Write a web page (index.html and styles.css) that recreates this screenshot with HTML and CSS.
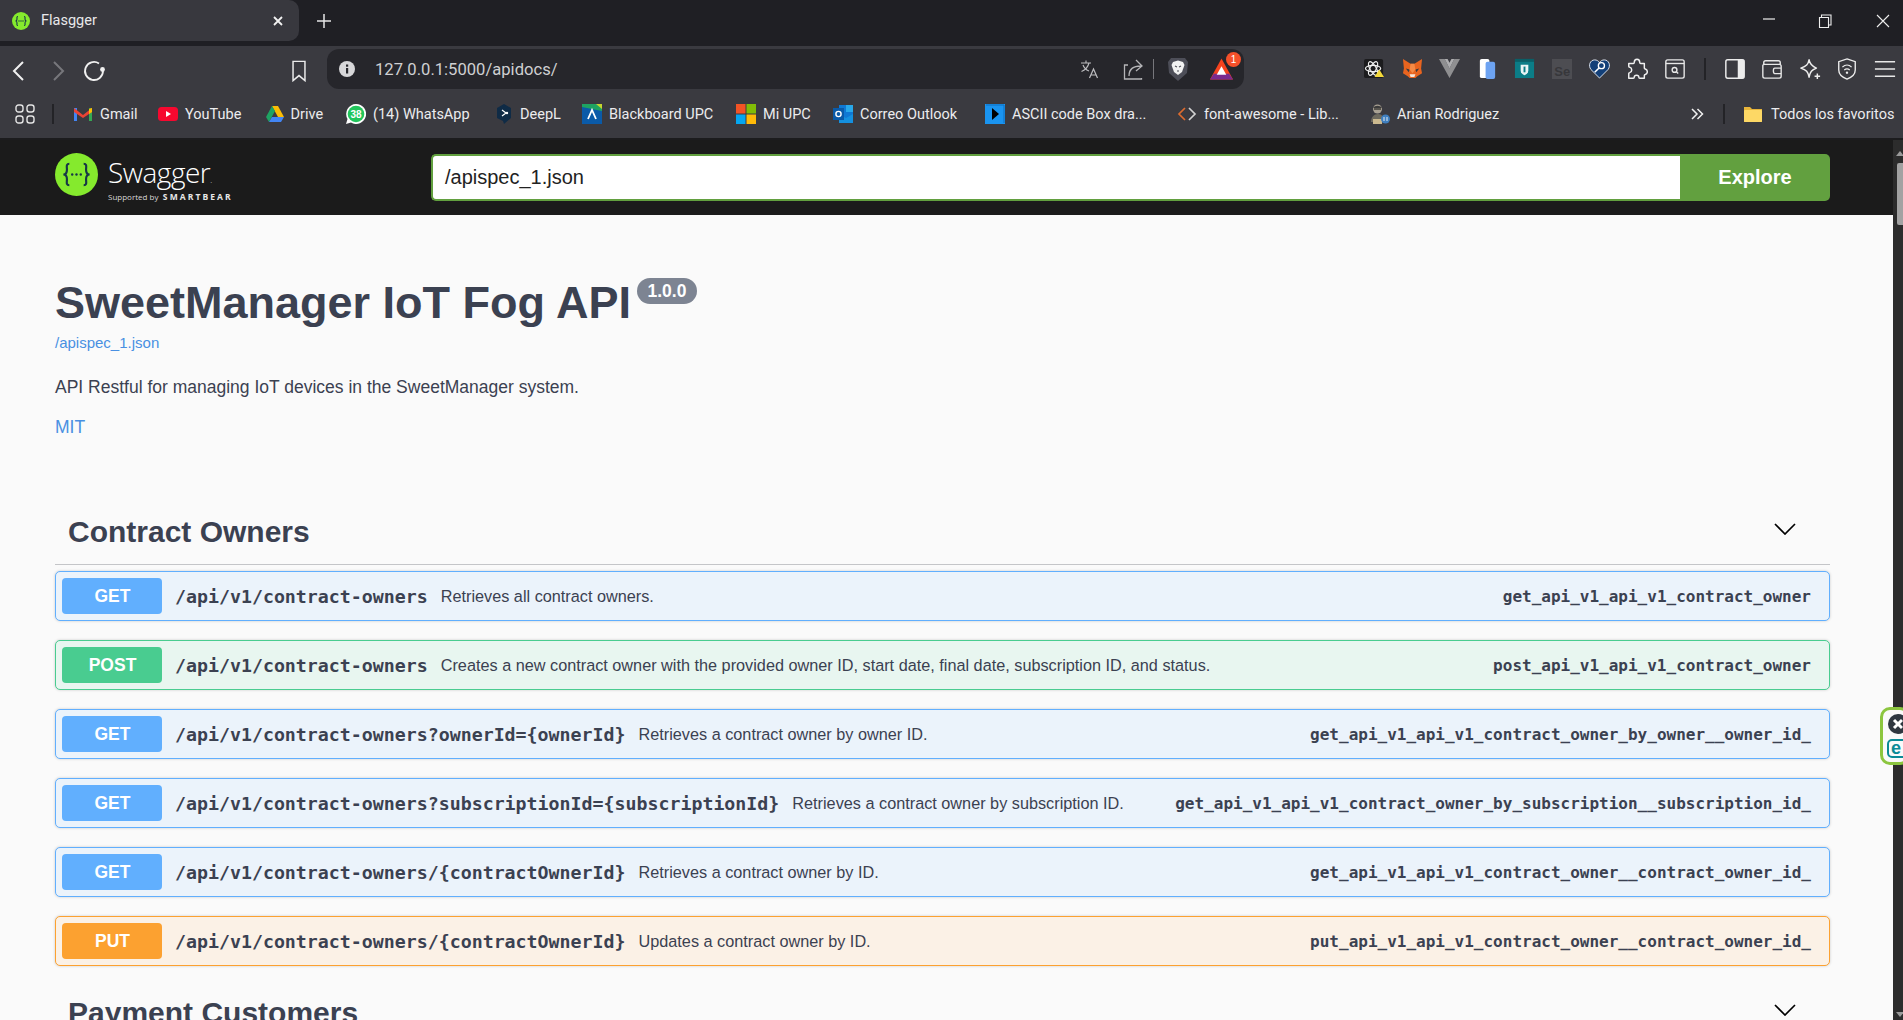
FILE: index.html
```html
<!DOCTYPE html>
<html lang="en">
<head>
<meta charset="utf-8">
<title>Flasgger</title>
<link rel="stylesheet" href="styles.css">
</head>
<body>
<div class="browser">
  <div class="tabstrip">
    <div class="tab">
      <svg class="fav" viewBox="0 0 18 18"><circle cx="9" cy="9" r="9" fill="#85ea2d"/><g fill="none" stroke="#173647" stroke-width="1.100"><path d="M6 4.500C4.500 4.500 5 6 5 7 5 8.500 4.300 9 3.500 9 4.300 9 5 9.500 5 11 5 12 4.500 13.500 6 13.500"/><path d="M12 4.500C13.500 4.500 13 6 13 7 13 8.500 13.700 9 14.500 9 13.700 9 13 9.500 13 11 13 12 13.500 13.500 12 13.500"/></g><g fill="#173647"><circle cx="7" cy="9" r=".7"/><circle cx="9" cy="9" r=".7"/><circle cx="11" cy="9" r=".7"/></g></svg>
      <span class="tab-title">Flasgger</span>
      <svg class="tab-x" viewBox="0 0 12 12"><path d="M2 2l8 8M10 2l-8 8" stroke="#f2f2f2" stroke-width="1.800" fill="none"/></svg>
    </div>
    <svg class="tab-plus" viewBox="0 0 14 14"><path d="M7 0v14M0 7h14" stroke="#e6e6e6" stroke-width="1.500" fill="none"/></svg>
    <div class="winctl">
      <svg class="win" viewBox="0 0 14 14"><path d="M1 5h12" stroke="#eee" stroke-width="1.200"/></svg>
      <svg class="win" viewBox="0 0 14 14"><path d="M1.500 3.500h9v10h-9zM3.500 3.500v-2.500h9.500v10h-2.500" stroke="#eee" stroke-width="1.100" fill="none"/></svg>
      <svg class="win win-close" viewBox="0 0 14 14"><path d="M1 1l12 12M13 1L1 13" stroke="#eee" stroke-width="1.100" fill="none"/></svg>
    </div>
  </div>

  <div class="toolbar">
    <div class="nav-icons">
      <svg class="nav" viewBox="0 0 24 24"><path d="M15 3L6 12l9 9" stroke="#f0f0f0" stroke-width="2" fill="none"/></svg>
      <svg class="nav" viewBox="0 0 24 24"><path d="M9 3l9 9-9 9" stroke="#77777c" stroke-width="2" fill="none"/></svg>
      <svg class="nav" viewBox="0 0 24 24"><path d="M21 12a9 9 0 1 1-4-7.500" stroke="#f0f0f0" stroke-width="1.800" fill="none"/><circle cx="20.500" cy="10.500" r="2.400" fill="#f0f0f0"/></svg>
    </div>
    <svg class="bookmark" viewBox="0 0 16 24"><path d="M1.500 1.500h13v21L8 17l-6.500 5.500z" stroke="#ececec" stroke-width="1.600" fill="none"/></svg>
    <div class="omnibox">
      <svg class="info" viewBox="0 0 16 16"><circle cx="8" cy="8" r="8" fill="#d7d7d9"/><rect x="7" y="7" width="2.200" height="5.500" fill="#26262b"/><rect x="7" y="3.500" width="2.200" height="2.200" fill="#26262b"/></svg>
      <span class="url">127.0.0.1:5000/apidocs/</span>
      <div class="omni-right">
        <svg class="o-ic o-translate" viewBox="0 0 20 20"><path d="M1 4h10M6 1.500V4M9 4c-1 4-4 7-7.500 8.500M3 6c1 3 3.500 5 6 6" stroke="#bdbdc0" stroke-width="1.100" fill="none"/><path d="M9.500 19l4-9 4 9M11 16h5" stroke="#bdbdc0" stroke-width="1.200" fill="none"/></svg>
        <svg class="o-ic o-share" viewBox="0 0 20 24"><path d="M5 8H1.500v14h17v-1M6 19c0-7 4-10 12-10M13 3l6 6-6 5" stroke="#b5b5b8" stroke-width="1.300" fill="none"/></svg>
        <i class="o-sep"></i>
        <svg class="o-lion" viewBox="0 0 20 24"><path d="M3 1h14l3 4-1 11-9 8-9-8L0 5z" fill="#4d4e58"/><path d="M5 5l5-1.500L15 5l1.500 3-2.500 7-4 3-4-3-2.500-7z" fill="#f2f2f2"/><path d="M7 9l2 1M13 9l-2 1M9 14h2" stroke="#4d4e58" stroke-width="1.100"/></svg>
        <div class="bat">
          <svg class="bat-ic" viewBox="0 0 24 22"><path d="M12 0l12 22H0z" fill="#f5431e"/><path d="M0 22l4-6h16l4 6z" fill="#7a2a8e"/><path d="M12 8l5 9H7z" fill="#fff"/></svg>
          <span class="bat-badge">1</span>
        </div>
      </div>
    </div>
    <div class="ext-icons">
      <div class="slot"><svg class="s22" viewBox="0 0 22 22"><rect width="20" height="20" y="1" rx="2" fill="#1c1c1e"/><g stroke="#f1f1f1" stroke-width="1.200" fill="none"><ellipse cx="9.500" cy="11" rx="8" ry="3.200"/><ellipse cx="9.500" cy="11" rx="8" ry="3.200" transform="rotate(60 9.500 11)"/><ellipse cx="9.500" cy="11" rx="8" ry="3.200" transform="rotate(120 9.500 11)"/></g><path d="M16 12l5 8h-10z" fill="#f4d93a"/></svg></div>
      <div class="slot"><svg class="s22" viewBox="0 0 22 22"><path d="M1 1l8 5h4l8-5-1 10 1 5-5 3-2 2H8l-2-2-5-3 1-5z" fill="#e8641f"/><path d="M4 11l4 1-1 3zM18 11l-4 1 1 3z" fill="#3a3a40"/><path d="M8 17h6l-1 3H9z" fill="#f5e7dc"/><path d="M9 6h4l1 6-3 4-3-4z" fill="#f58a45"/></svg></div>
      <div class="slot"><svg class="s22" viewBox="0 0 22 22"><path d="M0 1h6l5 10 5-10h6L11 21z" fill="#8f8f91"/><path d="M6 1h3l2 4 2-4h3l-5 10z" fill="#aeaeb0"/></svg></div>
      <div class="slot"><svg class="s22" viewBox="0 0 22 22"><rect x="3" y="1" width="10" height="20" rx="2" fill="#fff"/><rect x="9" y="4" width="10" height="18" rx="2" fill="#6da3f2"/></svg></div>
      <div class="slot"><svg class="s22" viewBox="0 0 22 22"><rect x="1" y="1" width="20" height="20" fill="#0b7d87"/><rect x="1" y="1" width="20" height="3" fill="#0a5f67"/><path d="M7 7h8v6c0 3-2 4-4 5-2-1-4-2-4-5z" fill="#e8f4f5"/><path d="M10 9h2v6h-2z" fill="#0b7d87"/></svg></div>
      <div class="slot"><div class="se">Se</div></div>
      <div class="slot"><svg class="s22" viewBox="0 0 22 22"><path d="M11 21L2 12C-1 8 1 2 6 2c2 0 4 1 5 3 1-2 3-3 5-3 5 0 7 6 4 10z" fill="#123f78" stroke="#dfe6f0" stroke-width="1"/><circle cx="13" cy="8" r="3.200" fill="none" stroke="#fff" stroke-width="1.400"/><path d="M10.500 10.500L6 15" stroke="#fff" stroke-width="1.600"/></svg></div>
      <div class="slot"><svg class="s24" viewBox="0 0 24 24"><path d="M9 5c0-5 6-5 6 0 0 1 0 1 1 1h4v5c0 1 0 1 1 1 3 1 3 5 0 6-1 0-1 0-1 1v3h-5c-1 0-1 0-1-1 0-3-5-3-5 0 0 1 0 1-1 1H3v-5c0-1 1-1 1-1 3-1 3-5 0-6 0 0-1 0-1-1V6h5c1 0 1 0 1-1z" stroke="#f0f0f0" stroke-width="1.600" fill="none" stroke-linejoin="round"/></svg></div>
      <div class="slot"><svg class="s24" viewBox="0 0 24 24"><rect x="2" y="2" width="20" height="20" rx="2" stroke="#e8e8e8" stroke-width="1.500" fill="none"/><path d="M2 6h20" stroke="#e8e8e8" stroke-width="1.500"/><circle cx="11.500" cy="13" r="2.600" stroke="#e8e8e8" stroke-width="1.500" fill="none"/><path d="M13.500 15l2 2" stroke="#e8e8e8" stroke-width="1.500"/></svg></div>
      <i class="t-sep"></i>
      <div class="slot"><svg class="s24" viewBox="0 0 24 24"><rect x="2" y="2" width="20" height="20" rx="2" stroke="#ececec" stroke-width="1.600" fill="none"/><rect x="15" y="2" width="7" height="20" fill="#ececec"/></svg></div>
      <div class="slot"><svg class="s24" viewBox="0 0 24 24"><path d="M3 7V5c0-1 1-2 2-2h14c1 0 2 1 2 2v2M2 8c0-1 1-1 2-1h16c1 0 2 1 2 2v11c0 1-1 2-2 2H4c-1 0-2-1-2-2zM22 11h-7c-2 0-2 6 0 6h7" stroke="#e8e8e8" stroke-width="1.500" fill="none"/></svg></div>
      <div class="slot"><svg class="s24" viewBox="0 0 24 24"><path d="M11 2c1 5 3 7 8 9-5 2-7 4-8 10-1-6-3-8-9-10 6-2 8-4 9-9z" stroke="#eee" stroke-width="1.600" fill="none" stroke-linejoin="round"/><path d="M20 17v6M17 20h6" stroke="#eee" stroke-width="1.600"/></svg></div>
      <div class="slot"><svg class="s24" viewBox="0 0 24 24"><path d="M12 1l9 3v9c0 5-4 8-9 10-5-2-9-5-9-10V4z" stroke="#ececec" stroke-width="1.500" fill="none"/><path d="M7 10c3-3 7-3 10 0M9 13c2-1.500 4-1.500 6 0" stroke="#ececec" stroke-width="1.400" fill="none"/><circle cx="12" cy="16" r="1.300" fill="#ececec"/></svg></div>
      <div class="slot"><svg class="s24" viewBox="0 0 24 24"><path d="M1 4h22M1 12h22M1 20h22" stroke="#e8e8e8" stroke-width="1.600"/></svg></div>
    </div>
  </div>

  <div class="bookmarks">
    <svg class="apps" viewBox="0 0 20 20"><g stroke="#e4e4e4" stroke-width="1.400" fill="none"><rect x="1" y="1" width="7" height="7" rx="2.500"/><rect x="12" y="1" width="7" height="7" rx="2.500"/><rect x="1" y="12" width="7" height="7" rx="2.500"/><rect x="12" y="12" width="7" height="7" rx="2.500"/></g></svg>
    <i class="b-sep"></i>
    <div class="b-list">
      <a class="bm"><svg class="bi" viewBox="0 0 20 20"><path d="M1 4h3v13H1z" fill="#4285f4"/><path d="M16 4h3v13h-3z" fill="#34a853"/><path d="M1 4l9 7 9-7v4l-9 6-9-6z" fill="#ea4335"/><path d="M16 5l3-1v4l-3 2z" fill="#fbbc04"/></svg><span>Gmail</span></a>
      <a class="bm"><svg class="bi" viewBox="0 0 20 20"><rect y="3" width="20" height="14" rx="3.500" fill="#f6082f"/><path d="M8 7l5 3-5 3z" fill="#fff"/></svg><span>YouTube</span></a>
      <a class="bm"><svg class="bi bi-tight" viewBox="0 0 20 20"><path d="M7 2h6l6 11h-6z" fill="#fbbc04"/><path d="M7 2L1 13l3 5 6-11z" fill="#1ea362"/><path d="M4 18h12l3-5H7z" fill="#4285f4"/></svg><span>Drive</span></a>
      <a class="bm"><svg class="bi" viewBox="0 0 20 20"><path d="M10 0a10 10 0 1 1-5 18.600L0 20l1.500-5A10 10 0 0 1 10 0z" fill="#fff"/><circle cx="10" cy="10" r="8.300" fill="#22c65c"/><text x="10" y="13.500" text-anchor="middle" class="wa-text">38</text></svg><span>(14) WhatsApp</span></a>
      <a class="bm"><svg class="bi bi-tight" viewBox="0 0 20 20"><path d="M10 0l7 4v10l-7 6-1-3-6-3V4z" fill="#0f2b46"/><path d="M8 6l4 3-4 3" stroke="#fff" stroke-width="1.200" fill="none"/><circle cx="13" cy="9" r="1.200" fill="#fff"/></svg><span>DeepL</span></a>
      <a class="bm"><svg class="bi" viewBox="0 0 20 20"><rect width="20" height="20" fill="#0a5aa8"/><path d="M0 0h20v7L0 3z" fill="#1ea362"/><path d="M14 0h6v5z" fill="#c6d62e"/><path d="M6 15l4-9 4 9" stroke="#fff" stroke-width="1.800" fill="none"/></svg><span>Blackboard UPC</span></a>
      <a class="bm"><svg class="bi" viewBox="0 0 20 20"><rect width="9.500" height="9.500" fill="#f35325"/><rect x="10.500" width="9.500" height="9.500" fill="#81bc06"/><rect y="10.500" width="9.500" height="9.500" fill="#05a6f0"/><rect x="10.500" y="10.500" width="9.500" height="9.500" fill="#ffba08"/></svg><span>Mi UPC</span></a>
      <a class="bm"><svg class="bi" viewBox="0 0 20 20"><rect x="6" y="1" width="14" height="14" fill="#0f78d4"/><rect x="13" y="1" width="7" height="7" fill="#28a8ea"/><path d="M6 10l7 4 7-4v9H6z" fill="#1490df"/><rect y="4" width="11" height="12" fill="#0a5aa8"/><circle cx="5.500" cy="10" r="2.600" stroke="#fff" stroke-width="1.400" fill="none"/></svg><span>Correo Outlook</span></a>
      <a class="bm"><svg class="bi" viewBox="0 0 20 20"><rect width="20" height="20" fill="#1a94f0"/><path d="M1 1h18v18" stroke="#0c6fc0" fill="none"/><path d="M7 4l7 6-7 6z" fill="#000"/></svg><span>ASCII code Box dra...</span></a>
      <a class="bm"><svg class="bi" viewBox="0 0 20 20"><path d="M8 4l-6 6 6 6" stroke="#dd6b2e" stroke-width="1.700" fill="none"/><path d="M12 4l6 6-6 6" stroke="#d2d2d2" stroke-width="1.700" fill="none"/></svg><span>font-awesome - Lib...</span></a>
      <a class="bm"><svg class="bi" viewBox="0 0 20 20"><circle cx="7.500" cy="5" r="4.500" fill="#a9a193"/><path d="M3 4c2-3 7-3 9 0z" fill="#3b3b3b"/><path d="M4 5h7" stroke="#222" stroke-width="1.200"/><path d="M1 18c0-5 3-8 7-8s6 3 6 8z" fill="#6e6a5e"/><rect x="3" y="15" width="9" height="5" fill="#cbb98f"/><circle cx="15.500" cy="15" r="4.500" fill="#3f7fbf"/><path d="M14 13v4M17 13v4" stroke="#e6eef5"/></svg><span>Arian Rodriguez</span></a>
    </div>
    <svg class="more" viewBox="0 0 14 14"><path d="M2 2l5 5-5 5M7.500 2l5 5-5 5" stroke="#f0f0f0" stroke-width="1.500" fill="none"/></svg>
    <i class="b-sep b-sep2"></i>
    <a class="bm all"><svg class="bi" viewBox="0 0 20 20"><path d="M1 3h6l2 2h10v13H1z" fill="#e8b53a"/><rect x="1" y="6" width="18" height="12" rx="1" fill="#fdd865"/></svg><span>Todos los favoritos</span></a>
  </div>
</div>

<div class="viewport">
  <div class="page">
    <header class="topbar">
      <div class="logo">
        <svg class="logo-mark" viewBox="0 0 18 18"><circle cx="9" cy="9" r="9" fill="#85ea2d"/><g fill="none" stroke="#173647" stroke-width=".9"><path d="M6 4.500C4.500 4.500 5 6 5 7 5 8.500 4.300 9 3.500 9 4.300 9 5 9.500 5 11 5 12 4.500 13.500 6 13.500"/><path d="M12 4.500C13.500 4.500 13 6 13 7 13 8.500 13.700 9 14.500 9 13.700 9 13 9.500 13 11 13 12 13.500 13.500 12 13.500"/></g><g fill="#173647"><circle cx="7.200" cy="9" r=".5"/><circle cx="9" cy="9" r=".5"/><circle cx="10.800" cy="9" r=".5"/></g></svg>
        <div class="logo-text">
          <div class="logo-name">Swagger<span class="logo-dot">.</span></div>
          <div class="logo-sub"><span class="logo-by">Supported by</span> <span class="logo-bear">SMARTBEAR</span></div>
        </div>
      </div>
      <form class="search">
        <div class="search-input">/apispec_1.json</div>
        <div class="search-btn">Explore</div>
      </form>
    </header>

    <main class="content">
      <h1 class="title">SweetManager IoT Fog API<span class="version">1.0.0</span></h1>
      <a class="spec-link">/apispec_1.json</a>
      <p class="desc">API Restful for managing IoT devices in the SweetManager system.</p>
      <a class="license">MIT</a>

      <section class="tag">
        <div class="tag-head">
          <h2 class="tag-name">Contract Owners</h2>
          <svg class="chev" viewBox="0 0 22 12"><path d="M1 1l10 10L21 1" stroke="#000" stroke-width="1.700" fill="none"/></svg>
        </div>
        <div class="ops">
          <div class="op get"><span class="method">GET</span><span class="path">/api/v1/contract-owners</span><span class="sum">Retrieves all contract owners.</span><span class="opid">get_api_v1_api_v1_contract_owner</span></div>
          <div class="op post"><span class="method">POST</span><span class="path">/api/v1/contract-owners</span><span class="sum">Creates a new contract owner with the provided owner ID, start date, final date, subscription ID, and status.</span><span class="opid">post_api_v1_api_v1_contract_owner</span></div>
          <div class="op get"><span class="method">GET</span><span class="path">/api/v1/contract-owners?ownerId={ownerId}</span><span class="sum">Retrieves a contract owner by owner ID.</span><span class="opid">get_api_v1_api_v1_contract_owner_by_owner__owner_id_</span></div>
          <div class="op get"><span class="method">GET</span><span class="path">/api/v1/contract-owners?subscriptionId={subscriptionId}</span><span class="sum">Retrieves a contract owner by subscription ID.</span><span class="opid">get_api_v1_api_v1_contract_owner_by_subscription__subscription_id_</span></div>
          <div class="op get"><span class="method">GET</span><span class="path">/api/v1/contract-owners/{contractOwnerId}</span><span class="sum">Retrieves a contract owner by ID.</span><span class="opid">get_api_v1_api_v1_contract_owner__contract_owner_id_</span></div>
          <div class="op put"><span class="method">PUT</span><span class="path">/api/v1/contract-owners/{contractOwnerId}</span><span class="sum">Updates a contract owner by ID.</span><span class="opid">put_api_v1_api_v1_contract_owner__contract_owner_id_</span></div>
        </div>
      </section>

      <section class="tag tag-next">
        <div class="tag-head">
          <h2 class="tag-name">Payment Customers</h2>
          <svg class="chev" viewBox="0 0 22 12"><path d="M1 1l10 10L21 1" stroke="#000" stroke-width="1.700" fill="none"/></svg>
        </div>
      </section>
    </main>
  </div>
  <div class="scrollbar">
    <i class="arrow-up"></i>
    <i class="thumb"></i>
    <i class="arrow-down"></i>
  </div>
  <div class="widget">
    <svg class="w-x" viewBox="0 0 20 20"><circle cx="10" cy="10" r="10" fill="#2f3740"/><path d="M6 6l8 8M14 6l-8 8" stroke="#fff" stroke-width="3"/></svg>
    <div class="w-e">e</div>
  </div>
</div>
</body>
</html>
```
FILE: styles.css
```css
* { box-sizing: border-box; }
html, body { margin: 0; padding: 0; }
body {
  width: 1903px;
  height: 1020px;
  overflow: hidden;
  background: #fafafa;
  font-family: "Liberation Sans", Arial, sans-serif;
  display: flex;
  flex-direction: column;
}
i { display: block; }

/* browser chrome */
.browser { height: 140px; flex: none; background: #1c1c1e; }
.tabstrip { height: 46px; background: #1f1f24; display: flex; align-items: flex-start; position: relative; }
.tab { width: 299px; height: 41px; background: #38383e; border-radius: 0 10px 10px 0; display: flex; align-items: center; padding-left: 12px; }
.fav { width: 18px; height: 18px; flex: none; }
.tab-title { margin-left: 11px; color: #e8e8ea; font: 14.500px "Roboto", sans-serif; flex: 1; }
.tab-x { width: 12px; height: 12px; margin-right: 15px; }
.tab-plus { width: 14px; height: 14px; margin: 14px 0 0 18px; }
.winctl { margin-left: auto; display: flex; align-items: center; height: 41px; padding-right: 13px; }
.win { width: 14px; height: 14px; margin-left: 42px; }
.win-close { margin-left: 44px; }

.toolbar { height: 50px; background: #3a3a40; display: flex; align-items: center; }
.nav-icons { display: flex; width: 289px; padding-left: 8px; gap: 13px; flex: none; }
.nav { width: 24px; height: 24px; flex: none; }
.bookmark { width: 16px; height: 22px; flex: none; margin-right: 20px; margin-left: 2px; }
.omnibox { width: 917px; height: 40px; margin-top: -5px; background: #26262b; border-radius: 12px; display: flex; align-items: center; padding-left: 12px; flex: none; }
.info { width: 16px; height: 16px; flex: none; }
.url { margin-left: 20px; color: #cfd0d2; font: 16.600px "Roboto", sans-serif; position: relative; top: 1px; }
.omni-right { margin-left: auto; display: flex; align-items: center; padding-right: 11px; }
.o-ic { flex: none; }
.o-translate { width: 20px; height: 20px; }
.o-share { width: 20px; height: 24px; margin-left: 23px; }
.o-sep { width: 1px; height: 20px; background: #77777c; margin-left: 10px; }
.o-lion { width: 20px; height: 24px; margin-left: 14px; }
.bat { position: relative; margin-left: 22px; width: 24px; height: 22px; margin-right: -1px; }
.bat-ic { width: 23px; height: 22px; display: block; }
.bat-badge { position: absolute; top: -6px; right: -7px; width: 15px; height: 15px; border-radius: 50%; background: #f5502a; color: #fff; font: 10px "Liberation Sans", sans-serif; text-align: center; line-height: 15px; }
.ext-icons { display: flex; align-items: center; margin-left: 112px; margin-top: -5px; flex: none; }
.slot { width: 37.500px; height: 24px; display: flex; align-items: center; justify-content: center; flex: none; }
.s22 { width: 21px; height: 21px; display: block; }
.s24 { width: 22px; height: 22px; display: block; }
.t-sep { width: 2px; height: 22px; background: #232327; margin: 0 10.250px; flex: none; }
.se { width: 20px; height: 20px; background: #4d4d52; color: #37373b; font: bold 13px/26px "Liberation Sans", sans-serif; text-align: center; }

.bookmarks { height: 42px; padding-bottom: 6px; background: #3a3a40; display: flex; align-items: center; }
.apps { width: 20px; height: 20px; margin-left: 15px; flex: none; }
.b-sep { width: 2px; height: 20px; background: #232327; margin-left: 17px; flex: none; }
.b-list { display: grid; grid-template-columns: 85px 106.500px 81.500px 148px 88px 154px 97px 152px 192px 193px 150px; margin-left: 19px; flex: none; }
.bm { display: flex; align-items: center; color: #ececee; font: 14.500px "Roboto", sans-serif; white-space: nowrap; }
.bi { width: 20px; height: 20px; margin-right: 7px; flex: none; }
.bi-tight { margin-right: 6px; }
.wa-text { font: bold 10px "Liberation Sans", sans-serif; fill: #fff; }
.more { width: 14px; height: 14px; margin-left: 170px; flex: none; }
.b-sep2 { margin-left: 19px; }
.all { margin-left: 18px; }
.all .bi { margin-right: 8px; }

/* page */
.viewport { flex: 1; display: flex; position: relative; min-height: 0; }
.page { width: 1893px; flex: none; overflow: hidden; }
.topbar { height: 75px; background: #1b1b1b; display: flex; align-items: center; padding: 0 63px 0 55px; }
.logo { display: flex; width: 376px; flex: none; height: 75px; align-items: flex-start; }
.logo-mark { width: 43px; height: 43px; margin-top: 13px; flex: none; }
.logo-text { margin-left: 10px; color: #fff; }
.logo-name { font: 300 28px/32px "Open Sans", sans-serif; margin-top: 16px; letter-spacing: -0.500px; }
.logo-dot { font-size: 8px; }
.logo-sub { margin-top: -7px; line-height: 12px; white-space: nowrap; }
.logo-by { font: 8px "Open Sans", sans-serif; color: #d8d8d8; }
.logo-bear { font: bold 8.500px "Open Sans", sans-serif; letter-spacing: 2.100px; color: #e8e8e8; }
.search { flex: 1; display: flex; height: 47px; }
.search-input { flex: 1; background: #fff; border: 2px solid #62a03f; border-right: none; border-radius: 5px 0 0 5px; font-size: 20px; line-height: 43px; padding-left: 12px; color: #222; }
.search-btn { width: 150px; background: #62a03f; color: #fff; font-size: 20px; font-weight: bold; text-align: center; line-height: 47px; border-radius: 0 5px 5px 0; }

.content { padding: 0 0 0 55px; margin-right: 63px; color: #3b4151; }
.title { margin: 61px 0 0; font-size: 45px; line-height: 54px; font-weight: bold; color: #3b4151; display: flex; align-items: flex-start; }
.version { margin: 2px 0 0 6px; height: 26px; width: 60px; border-radius: 13px; background: #7d8492; color: #fff; font-size: 17.500px; line-height: 26px; text-align: center; font-weight: bold; }
.spec-link { display: block; margin-top: 3.500px; font-size: 15px; line-height: 18px; color: #4990e2; }
.desc { margin: 25px 0 0; font-size: 17.500px; line-height: 20px; color: #3b4151; }
.license { display: block; margin-top: 20px; font-size: 17.500px; line-height: 20px; color: #4990e2; }

.tag { margin-top: 67.400px; }
.tag-head { display: flex; align-items: center; justify-content: space-between; height: 61px; border-bottom: 1px solid #c4c5c8; padding: 0 34px 4px 13px; }
.tag-name { margin: 0; font-size: 30px; font-weight: bold; line-height: 36px; color: #3b4151; }
.chev { width: 22px; height: 12px; flex: none; margin-top: -6px; }
.ops { display: flex; flex-direction: column; gap: 18.400px; margin-top: 6px; }
.op { height: 50.600px; border: 1.250px solid; border-radius: 5px; display: flex; align-items: center; padding: 0 18px 0 6px; box-shadow: 0 0 3px rgba(0,0,0,.19); white-space: nowrap; }
.get { background: #ebf3fb; border-color: #61affe; }
.post { background: #e8f6f0; border-color: #49cc90; }
.put { background: #fbf1e6; border-color: #fca130; }
.method { width: 100px; height: 36px; flex: none; border-radius: 4px; color: #fff; font-size: 17.500px; font-weight: bold; text-align: center; line-height: 36px; padding-left: 1px; }
.get .method { background: #61affe; }
.post .method { background: #49cc90; }
.put .method { background: #fca130; }
.path { margin-left: 13px; font: bold 18.250px "DejaVu Sans Mono", monospace; color: #3b4151; }
.sum { margin-left: 13px; font-size: 16.250px; color: #3b4151; }
.opid { margin-left: auto; font: bold 16px "DejaVu Sans Mono", monospace; color: #3b4151; }
.tag-next { margin-top: 18.500px; }

/* scrollbar */
.scrollbar { width: 10px; flex: none; background: #2c2c2c; position: relative; }
.arrow-up { position: absolute; top: 11px; left: 3px; border: 4px solid transparent; border-top: 0; border-bottom: 5px solid #9a9a9a; }
.thumb { position: absolute; top: 23px; left: 4px; width: 6px; height: 62px; background: #a2a2a2; border-radius: 2px 0 0 2px; }
.arrow-down { position: absolute; bottom: 3px; left: 3px; border: 4px solid transparent; border-bottom: 0; border-top: 5px solid #9a9a9a; }

/* extension widget over the page edge */
.widget { position: absolute; left: 1880px; top: 567px; width: 30px; height: 58px; background: #fafafa; border: 3px solid #8cc63f; border-radius: 10px; padding: 4px 0 0 5px; }
.w-x { width: 20px; height: 20px; display: block; }
.w-e { width: 22px; height: 19px; margin: 5px 0 0 -1px; border: 2px solid #0b8a96; border-radius: 5px; color: #0b8a96; font: bold 18px/14px "Liberation Sans", sans-serif; padding-left: 2px; }
```
